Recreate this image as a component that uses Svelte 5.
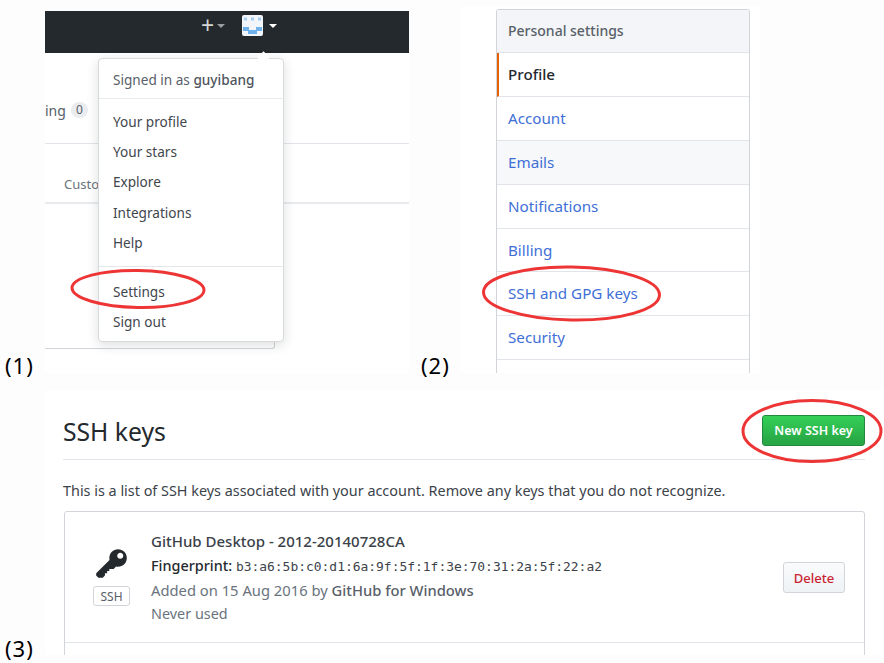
<script lang="ts">
	const menuTop = ['Your profile', 'Your stars', 'Explore', 'Integrations', 'Help'];
	const menuBottom = ['Settings', 'Sign out'];
	const settings = ['Account', 'Emails', 'Notifications', 'Billing', 'SSH and GPG keys', 'Security'];
</script>

<div class="page">
	<div class="top">
		<div class="shot">
			<span class="label one">(1)</span>
			<div class="panel profile-panel">
				<div class="navbar">
					<span class="plus">+</span>
					<span class="caret small"></span>
					<svg class="avatar" width="21" height="21" viewBox="0 0 21 21">
						<rect width="21" height="21" rx="2" fill="#f2f5f9" />
						<rect x="2" y="2.5" width="3" height="3" fill="#a6cdf0" />
						<rect x="9" y="2.5" width="3" height="3" fill="#a6cdf0" />
						<rect x="16" y="2.5" width="3" height="3" fill="#a6cdf0" />
						<path d="M1 12h6v3h7v-3h6v4h-5v3H6v-3H1z" fill="#6fb1ea" />
					</svg>
					<span class="caret"></span>
				</div>
				<div class="tab-line">
					<span class="tab-text">ing</span>
					<span class="counter">0</span>
				</div>
				<div class="custom-line"><span class="tab-text">Custom</span></div>
				<div class="bottom-line"></div>

				<div class="dropdown">
					<div class="signed">Signed in as <strong>guyibang</strong></div>
					<div class="menu-group">
						{#each menuTop as item}
							<div class="menu-item">{item}</div>
						{/each}
					</div>
					<div class="menu-group last">
						{#each menuBottom as item}
							<div class="menu-item">{item}</div>
						{/each}
					</div>
				</div>
			</div>
		</div>

		<div class="shot second">
			<span class="label two">(2)</span>
			<div class="panel settings-panel">
				<div class="side-nav">
					<div class="side-head">Personal settings</div>
					<div class="side-item selected">Profile</div>
					{#each settings as item}
						<div class="side-item" class:hover={item === 'Emails'}>{item}</div>
					{/each}
				</div>
			</div>
		</div>
	</div>

	<div class="shot third">
		<span class="label three">(3)</span>
		<div class="panel keys-panel">
			<div class="keys-head">
				<h2>SSH keys</h2>
				<button class="new-key">New SSH key</button>
			</div>
			<p class="intro">This is a list of SSH keys associated with your account. Remove any keys that you do not recognize.</p>
			<div class="key-box">
				<div class="key-row">
					<div class="key-icon">
						<svg width="31" height="35" viewBox="0 0 14 16">
							<path fill="#24292e" d="M12.83 2.17C12.08 1.42 11.14 1.03 10 1c-1.13.03-2.08.42-2.83 1.17S6.04 3.86 6.01 5c0 .3.03.59.09.89L0 12v1l1 1h2l1-1v-1h1v-1h1v-1h2l1.09-1.11c.3.08.59.11.91.11 1.14-.03 2.08-.42 2.83-1.17S13.97 6.14 14 5c-.03-1.14-.42-2.08-1.17-2.83zM11 5.38c-.77 0-1.38-.61-1.38-1.38 0-.77.61-1.38 1.38-1.38.77 0 1.38.61 1.38 1.38 0 .77-.61 1.38-1.38 1.38z" />
						</svg>
						<span class="ssh-badge">SSH</span>
					</div>
					<div class="key-info">
						<strong class="key-title">GitHub Desktop - 2012-20140728CA</strong>
						<div class="fingerprint"><strong>Fingerprint:</strong> <code>b3:a6:5b:c0:d1:6a:9f:5f:1f:3e:70:31:2a:5f:22:a2</code></div>
						<div class="muted added">Added on 15 Aug 2016 by <strong>GitHub for Windows</strong></div>
						<div class="muted">Never used</div>
					</div>
					<button class="delete">Delete</button>
				</div>
			</div>
		</div>
	</div>

	<!-- hand drawn circles on top of the screenshots -->
	<svg class="marks" width="884" height="663" viewBox="0 0 884 663">
		<ellipse cx="138" cy="289" rx="66" ry="18.5" transform="rotate(1 138 289)" />
		<ellipse cx="571.5" cy="293.5" rx="88" ry="26.5" transform="rotate(1 571.5 293.5)" />
		<ellipse cx="812" cy="431" rx="69" ry="30.5" />
	</svg>
</div>

<style>
	:global(body) {
		margin: 0;
		background: #fff;
	}

	.page {
		position: relative;
		width: 884px;
		height: 663px;
		overflow: hidden;
		background: #fdfdfd;
		font-family: 'Noto Sans', 'Liberation Sans', sans-serif;
		font-size: 13.6px;
		color: #24292e;
	}

	.top {
		display: flex;
		height: 373px;
	}

	.shot {
		display: flex;
		align-items: flex-end;
	}

	.second {
		margin-left: 12px;
	}

	.third {
		height: 282px;
		margin-top: 8px;
	}

	.label {
		width: 40px;
		padding-left: 5px;
		font-size: 22px;
		letter-spacing: 1px;
		line-height: 26px;
		color: #000;
		flex: none;
		margin-bottom: -5px;
	}

	.two {
		padding-left: 0;
	}

	.three {
		margin-bottom: 2px;
	}

	.panel {
		background: #fff;
		flex: none;
	}

	/* (1) */
	.profile-panel {
		position: relative;
		width: 364px;
		height: 362px;
	}

	.navbar {
		display: flex;
		align-items: center;
		height: 42px;
		padding-left: 156px;
		background: #24292e;
	}

	.plus {
		font-size: 23px;
		line-height: 28px;
		color: #d5d7d8;
		margin-bottom: 14px;
	}

	.caret {
		width: 0;
		height: 0;
		margin-left: 6px;
		margin-bottom: 12px;
		border: 4px solid transparent;
		border-top: 4px solid #fff;
		border-bottom: 0;
	}

	.caret.small {
		margin-left: 3px;
		border-top-color: #9a9d9f;
		margin-right: 17px;
	}

	.avatar {
		margin-bottom: 13px;
	}

	.tab-line {
		display: flex;
		align-items: center;
		gap: 5px;
		height: 90px;
		border-bottom: 1px solid #e1e4e8;
		color: #586069;
	}

	.tab-line .tab-text {
		font-size: 14px;
		margin-top: 24px;
	}

	.counter {
		margin-top: 24px;
		padding: 0 5px;
		border-radius: 10px;
		background: #eaecef;
		font-size: 12px;
		line-height: 16px;
		color: #586069;
	}

	.custom-line {
		height: 60px;
		padding: 31px 0 0 19px;
		box-sizing: border-box;
		border-bottom: 2px solid #e8eaed;
		color: #6a737d;
		font-size: 13px;
	}

	.bottom-line {
		width: 230px;
		height: 145px;
		box-sizing: border-box;
		border-right: 1px solid #d1d5da;
		border-bottom: 1px solid #d1d5da;
		border-bottom-right-radius: 3px;
	}

	.dropdown {
		position: absolute;
		left: 53px;
		top: 47px;
		width: 186px;
		height: 284px;
		box-sizing: border-box;
		padding-top: 8px;
		background: #fff;
		border: 1px solid #d8dadd;
		border-radius: 4px;
		box-shadow: 0 3px 12px rgba(27, 31, 35, 0.15);
	}

	.dropdown::before {
		content: '';
		position: absolute;
		top: -6px;
		left: 160px;
		width: 9px;
		height: 9px;
		background: #fff;
		transform: rotate(45deg);
	}

	.signed {
		height: 31px;
		padding-left: 14px;
		line-height: 25px;
		color: #586069;
		border-bottom: 1px solid #e8eaec;
		margin-bottom: 8px;
	}

	.signed strong {
		color: #4e555d;
		font-weight: 500;
	}

	.menu-group {
		padding-bottom: 8px;
		border-bottom: 1px solid #e4e6e9;
		margin-bottom: 10px;
	}

	.menu-group.last {
		border-bottom: 0;
		margin-bottom: 0;
	}

	.menu-item {
		height: 30.2px;
		line-height: 30px;
		padding-left: 14px;
		color: #3f464d;
	}

	/* (2) */
	.settings-panel {
		width: 299px;
		height: 367px;
		margin-top: 6px;
		overflow: hidden;
	}

	.side-nav {
		width: 254px;
		margin: 3px 0 0 35px;
		box-sizing: border-box;
		border: 1px solid #d1d5da;
		border-radius: 3px;
		border-bottom: 0;
		height: 370px;
	}

	.side-head {
		height: 42px;
		padding-left: 11px;
		line-height: 42px;
		font-size: 14px;
		font-weight: 500;
		color: #586069;
		background: #f3f5f8;
		border-bottom: 1px solid #e1e4e8;
	}

	.side-item {
		height: 42.9px;
		padding-left: 11px;
		line-height: 43px;
		font-size: 15.2px;
		color: #3f6fd6;
		border-bottom: 1px solid #e1e4e8;
	}

	.side-item.selected {
		padding-left: 9px;
		border-left: 2px solid #e36209;
		font-weight: 500;
		color: #24292e;
	}

	.side-item.hover {
		background: #f6f8fa;
	}

	/* (3) */
	.keys-panel {
		width: 839px;
		height: 265px;
		margin-bottom: 8px;
		padding: 0 19px 0 18px;
		box-sizing: border-box;
		overflow: hidden;
	}

	.keys-head {
		display: flex;
		justify-content: space-between;
		align-items: center;
		height: 69px;
		border-bottom: 1px solid #e1e4e8;
	}

	h2 {
		margin: 14px 0 0;
		font-size: 24.7px;
		font-weight: 400;
		color: #24292e;
	}

	.new-key {
		width: 103px;
		height: 31px;
		margin: 12px 0 0;
		padding: 0;
		font: 600 12.5px 'Noto Sans', 'Liberation Sans', sans-serif;
		color: #fff;
		background: linear-gradient(#34d058, #28a745 90%);
		border: 1px solid #23883f;
		border-radius: 3px;
	}

	.intro {
		margin: 21px 0 10px;
		line-height: 20px;
		font-size: 14.4px;
		color: #3c434a;
	}

	.key-box {
		margin-left: 1px;
		border: 1px solid #d1d5da;
		border-radius: 3px;
		height: 160px;
	}

	.key-row {
		display: flex;
		align-items: flex-start;
		height: 131px;
		box-sizing: border-box;
		border-bottom: 1px solid #e1e4e8;
	}

	.key-icon {
		display: flex;
		flex-direction: column;
		align-items: center;
		width: 37px;
		margin: 35px 0 0 28px;
		flex: none;
	}

	.ssh-badge {
		width: 37px;
		height: 20px;
		margin-top: 4px;
		box-sizing: border-box;
		text-align: center;
		font-size: 12px;
		line-height: 19px;
		color: #586069;
		border: 1px solid #d1d5da;
		border-radius: 3px;
	}

	.key-info {
		flex: 1;
		margin: 17px 0 0 21px;
		line-height: 24px;
		font-size: 14.4px;
	}

	.key-title {
		font-size: 15px;
		font-weight: 500;
		color: #3a4148;
	}

	.fingerprint {
		color: #24292e;
		font-size: 14.4px;
		line-height: 23px;
	}

	.fingerprint strong {
		font-weight: 500;
	}

	code {
		font-family: 'DejaVu Sans Mono', 'Liberation Mono', monospace;
		font-size: 12.95px;
		color: #3c434a;
	}

	.muted {
		color: #6a737d;
	}

	.added {
		font-size: 14.75px;
	}

	.muted strong {
		font-weight: 500;
		color: #586069;
	}

	.delete {
		width: 62px;
		height: 31px;
		margin: 50px 19px 0 0;
		padding: 0;
		font: 500 13px 'Noto Sans', 'Liberation Sans', sans-serif;
		color: #cb2431;
		background: linear-gradient(#fafbfc, #eff3f6 90%);
		border: 1px solid #d1d5da;
		border-radius: 3px;
		flex: none;
	}

	.marks {
		position: absolute;
		left: 0;
		top: 0;
		pointer-events: none;
	}

	.marks ellipse {
		fill: none;
		stroke: #ee3535;
		stroke-width: 3;
	}
</style>
